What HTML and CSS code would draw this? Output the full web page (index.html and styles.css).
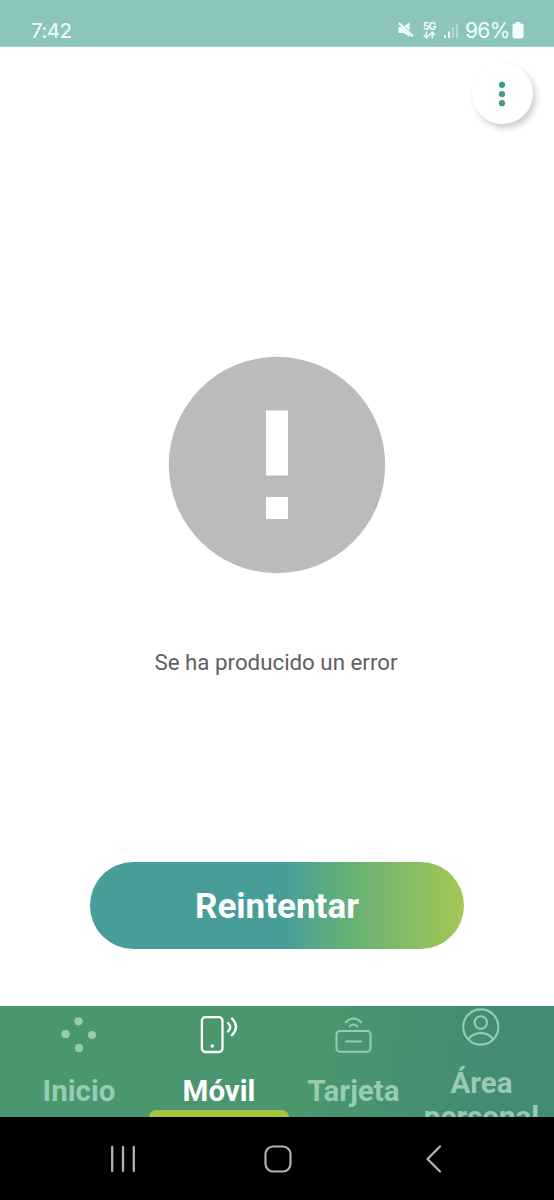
FILE: index.html
```html
<!DOCTYPE html>
<html lang="es">
<head>
<meta charset="utf-8">
<meta name="viewport" content="width=device-width, initial-scale=1">
<title>Error</title>
<link rel="stylesheet" href="styles.css">
</head>
<body>
<div class="screen">
  <header class="status">
    <span class="clock">7:42</span>
    <div class="status-icons">
      <svg class="mute" width="16" height="16" viewBox="0 0 16 16"><path d="M.5 5h3l8 7.500V15L6 11H.5zM6.500 4L11.500 .3V8.500z" fill="currentColor"/><path d="M1 1l14 13.500" stroke="currentColor" stroke-width="2.300"/></svg>
      <div class="network">
        <span class="gen">5G</span>
        <svg width="13" height="8" viewBox="0 0 13 8" fill="none" stroke="currentColor" stroke-width="1.500"><path d="M3.500 .5v6M.8 4l2.700 2.800L6.200 4M9.300 7.500v-6M6.600 4l2.700-2.800L12 4"/></svg>
      </div>
      <svg class="signal" width="15" height="16" viewBox="0 0 15 16" fill="currentColor"><rect x="0" y="12" width="2" height="3"/><rect x="4" y="8.500" width="2" height="6.500"/><rect x="8" y="4.500" width="2" height="10.500" opacity=".4"/><rect x="12" y="1" width="2" height="14" opacity=".4"/></svg>
      <span class="percent">96%</span>
      <svg class="battery" width="12" height="17" viewBox="0 0 12 17" fill="currentColor"><rect x="3.500" y="0" width="5" height="4" rx="1"/><rect x=".5" y="1.500" width="11" height="15" rx="2.200"/></svg>
    </div>
  </header>

  <main class="content">
    <div class="toolbar">
      <button class="more" aria-label="Más opciones">
        <svg width="8" height="26" viewBox="0 0 8 26" fill="#419788"><circle cx="4" cy="3.800" r="3.100"/><circle cx="4" cy="13" r="3.100"/><circle cx="4" cy="22.200" r="3.100"/></svg>
      </button>
    </div>
    <svg class="alert" width="218" height="218" viewBox="0 0 218 218"><circle cx="109" cy="109" r="108.200" fill="#bbb"/><path d="M98 54.500h22v65H98zM98 141h22v22H98z" fill="#fff"/></svg>
    <p class="message">Se ha producido un error</p>
    <button class="retry"><span>Reintentar</span></button>
  </main>

  <nav class="tabs">
    <a class="tab">
      <svg class="icon" width="40" height="40" viewBox="0 0 40 40" fill="currentColor"><circle cx="19.500" cy="7.300" r="4.100"/><circle cx="6.500" cy="20.200" r="4.100"/><circle cx="33" cy="21" r="4.100"/><circle cx="20" cy="34" r="4.100"/></svg>
      <span class="label">Inicio</span>
    </a>
    <a class="tab active">
      <svg class="icon" width="40" height="40" viewBox="0 0 40 40" fill="none" stroke="currentColor" stroke-width="2.300" stroke-linecap="round"><rect x="2.900" y="3.200" width="20.600" height="34.800" rx="3.500"/><circle cx="13.300" cy="32" r="1.700" fill="currentColor" stroke="none"/><path d="M29 9q4.500 4.200 0 8.500M33 4.500q8 8.300 0 16.600"/></svg>
      <span class="label">Móvil</span>
    </a>
    <a class="tab">
      <svg class="icon" width="40" height="40" viewBox="0 0 40 40" fill="none" stroke="currentColor" stroke-width="2" stroke-linecap="round"><rect x="2.500" y="16.900" width="34" height="20.800" rx="3.500"/><path d="M12 27.400h15M11.800 8.300q7.700-7.600 15.400 0M15.700 12.200q3.800-3.500 7.600 0"/></svg>
      <span class="label">Tarjeta</span>
    </a>
    <a class="tab tab-tall">
      <svg class="icon" width="40" height="40" viewBox="0 0 40 40" fill="none" stroke="currentColor" stroke-width="2.100"><circle cx="18.800" cy="20" r="17.600"/><circle cx="18.800" cy="15.500" r="6.200"/><path d="M6.300 32.500C11.800 24 25.800 24 31.300 32.500"/></svg>
      <span class="label">Área personal</span>
    </a>
  </nav>

  <footer class="system">
    <svg width="28" height="28" viewBox="0 0 28 28" stroke="#b2b2b2" stroke-width="2.300" stroke-linecap="round"><path d="M3.200 2v24M14 2v24M24.800 2v24"/></svg>
    <svg width="28" height="28" viewBox="0 0 28 28" fill="none" stroke="#b2b2b2" stroke-width="2.200"><rect x="1.500" y="1.500" width="25" height="25" rx="7.500"/></svg>
    <svg width="28" height="28" viewBox="0 0 28 28" fill="none" stroke="#b2b2b2" stroke-width="2.300" stroke-linecap="round" stroke-linejoin="round"><path d="M21 1.500L8.500 14 21 26.500"/></svg>
  </footer>
</div>
</body>
</html>
```

FILE: styles.css
```css
* {
  box-sizing: border-box;
}

body {
  margin: 0;
  background: #fff;
  font-family: Roboto, "Liberation Sans", sans-serif;
}

button {
  border: 0;
  padding: 0;
  font: inherit;
}

svg {
  display: block;
  flex: none;
}

.screen {
  width: 554px;
  height: 1200px;
  display: flex;
  flex-direction: column;
  overflow: hidden;
}

.status {
  height: 47px;
  flex: none;
  display: flex;
  justify-content: space-between;
  align-items: flex-start;
  padding: 17px 30px 0 31px;
  background: #8bc5be;
  border-bottom: 1px solid #a5cbc6;
  color: #f2fffc;
}

.clock {
  padding-top: 1px;
  font: 20.500px/26px Inter, sans-serif;
  letter-spacing: -0.500px;
}

.status-icons {
  display: flex;
  align-items: flex-start;
}

.mute {
  margin: 5px 9px 0 0;
}

.network {
  width: 13px;
  margin: 4px 8px 0 0;
}

.gen {
  display: block;
  height: 10px;
  font: 700 10px/10px Inter, sans-serif;
  letter-spacing: -0.600px;
}

.signal {
  margin: 6px 6px 0 0;
}

.percent {
  width: 45px;
  margin-right: 2px;
  padding-top: 1px;
  font: 21px/26px Inter, sans-serif;
  letter-spacing: -0.700px;
  white-space: nowrap;
}

.battery {
  margin-top: 5px;
}

.content {
  height: 959px;
  flex: none;
  display: flex;
  flex-direction: column;
  align-items: center;
}

.toolbar {
  align-self: stretch;
  height: 308.500px;
  display: flex;
  justify-content: flex-end;
  padding: 16px 21px 0 0;
}

.more {
  width: 61px;
  height: 61px;
  display: grid;
  place-items: center;
  padding-right: 2px;
  border-radius: 50%;
  background: #fff;
  box-shadow: 3px 4px 6px rgba(0, 0, 0, 0.200);
}

.message {
  margin: 74.500px 2px 0 0;
  font-size: 22.300px;
  line-height: 28px;
  color: #606060;
}

.retry {
  width: 374px;
  height: 87px;
  margin-top: 186px;
  padding-top: 3px;
  border-radius: 44px;
  background: linear-gradient(90deg, #479e98 0%, #479e98 52%, #63b078 68%, #a5c653 100%);
  color: #fff;
  font-size: 35px;
  font-weight: 700;
  line-height: 84px;
}

.tabs {
  height: 111px;
  flex: none;
  display: grid;
  grid-template-columns: 140px 140px 129px 127px;
  padding-left: 9px;
  background: linear-gradient(97deg, #4b976d 0%, #4b976d 55%, #438b74 90%, #438b74 100%);
  overflow: hidden;
}

.tab {
  height: 111px;
  display: flex;
  flex-direction: column;
  align-items: center;
  padding-top: 8px;
  color: #98cbb2;
  font-size: 29.500px;
  font-weight: 700;
  line-height: 34px;
  text-align: center;
}

.label {
  margin-top: 20px;
}

.active {
  color: #fff;
}

.active::after {
  content: "";
  width: 140px;
  height: 8px;
  margin-top: 2px;
  flex: none;
  border-radius: 7px 7px 0 0;
  background: #a9c23f;
}

.tab-tall {
  padding-top: 1px;
}

.tab-tall .label {
  margin-top: 19px;
}

.system {
  height: 83px;
  flex: none;
  display: flex;
  justify-content: space-between;
  padding: 28px 107px 0 109px;
  background: #000;
}
```
